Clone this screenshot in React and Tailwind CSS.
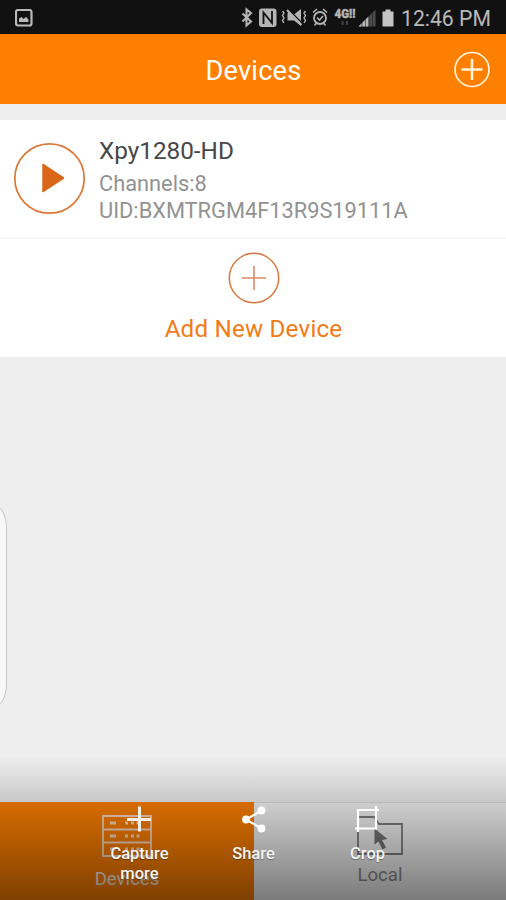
import React from "react";

function StatusBar() {
  return (
    <div className="flex h-[34px] items-center justify-between bg-[#111] text-[#b9b9b9]">
      <svg className="ml-[15px] mt-px" width="18" height="18" viewBox="0 0 18 18" fill="none">
        <rect x="1" y="1" width="15.5" height="15.5" rx="2" stroke="#b9b9b9" strokeWidth="2.2" />
        <path d="M4 13V9.5l2.5-1.5 2 2L11 8l2.5 2.5V13z" fill="#b9b9b9" />
      </svg>
      <div className="flex h-full items-center pr-[15px]">
        <svg width="160" height="34" viewBox="238 0 160 34" fill="none" stroke="#b4b4b4" strokeWidth="1.8">
          <path d="M242.5 13.5L251 21.5L246.5 25.5V9.5L251 13L242.5 21.5" strokeWidth="2.1" />
          <rect x="259" y="8.5" width="17.5" height="18.5" rx="3" fill="#b4b4b4" stroke="none" />
          <path d="M263.500 24V12.500L272 23V11" stroke="#111" strokeWidth="1.8" />
          <path d="M282.500 11l1.500 2-1.500 2.500 1.500 2.500-1.500 2.500 1.500 2.500M305.500 11l-1.500 2 1.500 2.500-1.500 2.500 1.500 2.500-1.500 2.500" strokeWidth="1.400" />
          <path d="M287.500 13h5l1.500 1.500 7-5.500v17l-7-5.500h-6.500z" fill="#b4b4b4" stroke="none" />
          <path d="M288.500 9.500L303 24" stroke="#111" strokeWidth="1.500" />
          <path d="M287 10L301.500 25" strokeWidth="2" />
          <circle cx="320" cy="18" r="6" />
          <path d="M313 12.500l4-3.500M323 9l4 3.500M316.500 23l-2 2.500M323.500 23l2 2.500M317 17.500l2.500 2.500 3.500-4" strokeWidth="1.600" />
          <text x="334.500" y="18" fontFamily="Roboto, sans-serif" fontSize="12" fontWeight="900" fill="#b4b4b4" stroke="#b4b4b4" strokeWidth=".4" textLength="21" lengthAdjust="spacingAndGlyphs">4G!!</text>
          <path d="M342.500 21v4M347 21v4" stroke="#444" strokeWidth="2" />
          <path d="M375.500 9.500V26.500H358.500z" fill="#4c4c4c" stroke="none" />
          <path d="M368.500 16.500V26.500H358.500z" fill="#b4b4b4" stroke="none" />
          <path d="M362 20v7M365.500 16v11M369 12v15M372.500 10v17" stroke="#111" strokeWidth=".5" />
          <path d="M382.500 11.500h3v-2h5v2h3v15h-11z" fill="#c4c4c4" stroke="none" />
        </svg>
        <span className="ml-[3px] mt-[3px] w-[90px] whitespace-nowrap text-[21.200px] leading-[34px]">12:46 PM</span>
      </div>
    </div>
  );
}

function Header() {
  return (
    <header className="relative flex h-[70px] items-center justify-center bg-[#ff8000] text-white">
      <h1 className="ml-px mt-[3px] text-[27.200px] leading-8 tracking-[0.2px]">Devices</h1>
      <svg className="absolute right-[15px] top-[16px]" width="38" height="38" viewBox="0 0 38 38" fill="none" stroke="#fff4dc">
        <circle cx="19" cy="19.500" r="17" strokeWidth="1.700" />
        <path d="M8.500 19.500h21M19 9v21" strokeWidth="2.500" />
      </svg>
    </header>
  );
}

function DeviceRow() {
  return (
    <div className="flex h-[119px] border-b-2 border-[#f5f5f5] bg-white">
      <svg className="ml-[13px] mt-[22px] shrink-0" width="73" height="73" viewBox="0 0 73 73" fill="none">
        <circle cx="36.500" cy="36.500" r="34.700" stroke="#dc7735" strokeWidth="1.700" />
        <path d="M30 22.500v27l20.500-13.500z" fill="#d8671a" stroke="#d8671a" strokeWidth="1.500" strokeLinejoin="round" />
      </svg>
      <div className="ml-[13px] pt-[14px]">
        <div className="text-[24.300px] leading-[34px] text-[#484848]">Xpy1280-HD</div>
        <div className="text-[21.800px] leading-[31px] text-[#929292]">Channels:8</div>
        <div className="text-[21.800px] leading-[24px] text-[#929292]">UID:BXMTRGM4F13R9S19111A</div>
      </div>
    </div>
  );
}

function AddDevice() {
  return (
    <div className="flex h-[118px] flex-col items-center bg-white">
      <svg className="ml-px mt-[13px]" width="52" height="52" viewBox="0 0 52 52" fill="none">
        <circle cx="26" cy="26" r="24.700" stroke="#d77840" strokeWidth="1.500" />
        <path d="M14 26h24M26 14v24" stroke="#dc8a62" strokeWidth="1.600" />
      </svg>
      <div className="ml-px mt-[9px] text-[24.200px] leading-8 tracking-[0.2px] text-[#f47a16]">Add New Device</div>
    </div>
  );
}

function BottomTabs() {
  return (
    <nav className="flex h-[98px] text-[18.600px] leading-6">
      <div className="flex flex-1 flex-col items-center bg-[#ff8000]">
        <svg className="mt-[13px]" width="50" height="42" viewBox="0 0 50 42" fill="none" stroke="#ffdcc4" strokeWidth="1.800">
          <path d="M1 1h48v40H1zM1 14.500h48M1 27.500h48" />
          <path d="M8 8h6M8 21h6M8 34h6M23 8h3M29 8h3M34.500 8h3M23 21h3M29 21h3M34.500 21h3M23 34h3M29 34h3M34.500 34h3" strokeWidth="3" />
        </svg>
        <span className="mt-[10px] text-[#fff0e4]">Devices</span>
      </div>
      <div className="flex w-[252px] flex-col items-center border-t border-[#ddd] bg-[#f5f5f5]">
        <svg className="mt-[12px]" width="46" height="42" viewBox="0 0 46 42" fill="none" stroke="#808080" strokeWidth="1.800">
          <path d="M1 38V2h16l5 7h23v30H1z" />
          <path d="M17.500 13.500v16l4-3 4 8 3.500-2-4-7.500 5.500-1z" fill="#777" stroke="none" />
        </svg>
        <span className="mt-[6px] text-[#8a8a8a]">Local</span>
      </div>
    </nav>
  );
}

function CaptureToolbar() {
  return (
    <div className="absolute inset-x-0 bottom-0 flex h-[144px] justify-center bg-linear-to-b from-black/0 to-black/50 pt-[49px] text-[16.500px] leading-5 text-[#f5f5f5] [text-shadow:0_1px_1px_rgba(0,0,0,0.35)]">
      <div className="flex w-[114px] flex-col items-center text-center">
        <svg width="28" height="28" viewBox="0 0 28 28" fill="none" stroke="#f8efe6" strokeWidth="3">
          <path d="M2 14.500h24M14.500 1.500v25" />
        </svg>
        <span className="ml-px mt-[11px] font-medium">Capture<br />more</span>
      </div>
      <div className="flex w-[114px] flex-col items-center">
        <svg width="28" height="28" viewBox="0 0 28 28" fill="#fff" stroke="#fff" strokeWidth="2.200">
          <path d="M22.500 5.500L7 14.500L22.500 23.500" fill="none" />
          <circle cx="22.500" cy="5.500" r="2.800" /><circle cx="7" cy="14.500" r="2.800" /><circle cx="22.500" cy="23.500" r="2.800" />
        </svg>
        <span className="ml-px mt-[11px] font-medium">Share</span>
      </div>
      <div className="flex w-[114px] flex-col items-center">
        <svg width="28" height="28" viewBox="0 0 28 28" fill="none" stroke="#fff" strokeWidth="2.200">
          <path d="M5 27V5h21M2 23.500h21V1" />
        </svg>
        <span className="ml-px mt-[11px] font-medium">Crop</span>
      </div>
    </div>
  );
}

export default function App() {
  return (
    <div className="relative flex h-[900px] w-[506px] flex-col overflow-hidden bg-[#eee] font-[Roboto,sans-serif]">
      <StatusBar />
      <Header />
      <main className="flex-1 pt-4">
        <DeviceRow />
        <AddDevice />
      </main>
      <BottomTabs />
      <div className="absolute -left-[24px] top-[504px] h-[204px] w-[31px] rounded-[14px/24px] border border-[#c8c8c8] bg-[#f8f8f8]" />
      <CaptureToolbar />
    </div>
  );
}
